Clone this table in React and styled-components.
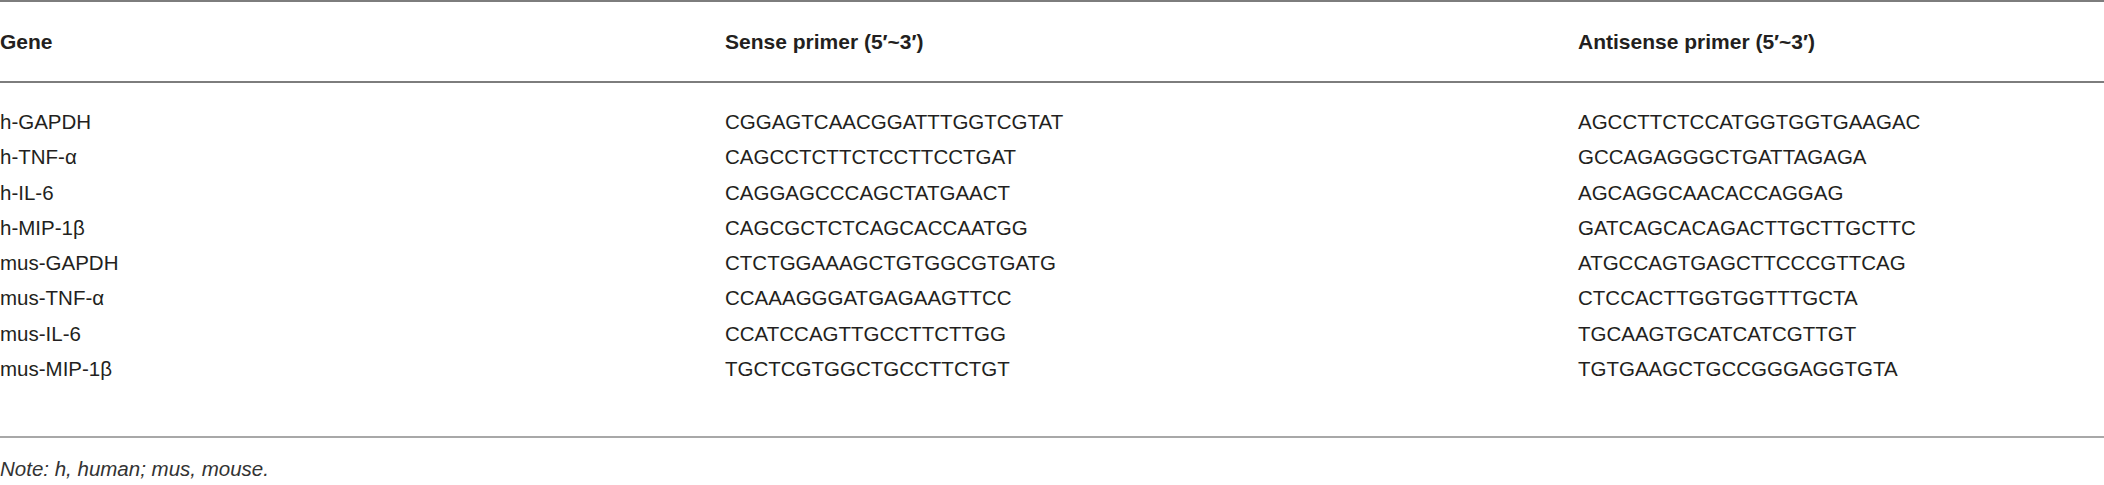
import React from "react";
import styled, { createGlobalStyle } from "styled-components";

const GlobalStyle = createGlobalStyle`
  html, body {
    margin: 0;
    padding: 0;
    background: #ffffff;
  }
`;

const Page = styled.div`
  width: 2104px;
  font-family: "Liberation Sans", Arial, sans-serif;
  color: #231f20;
`;

const Table = styled.table`
  width: 100%;
  border-collapse: collapse;
  table-layout: fixed;
  border-top: 2px solid #7d7d7d;
  border-bottom: 2px solid #a8a8a8;
`;

const HeadCell = styled.th`
  height: 79px;
  padding: 0;
  text-align: left;
  font-weight: 700;
  font-size: 21px;
  border-bottom: 2px solid #7d7d7d;
  vertical-align: middle;
`;

const Cell = styled.td`
  height: 35.3px;
  padding: ${props => (props.$first ? "21px" : "0")} 0 ${props => (props.$last ? "50px" : "0")} 0;
  font-size: 20.5px;
  line-height: 35.3px;
  white-space: nowrap;
  vertical-align: top;
`;

const Note = styled.p`
  margin: 19px 0 0 0;
  font-size: 20.5px;
  line-height: 24px;
  font-style: italic;
  color: #333333;
`;

const primers = [
  ["h-GAPDH", "CGGAGTCAACGGATTTGGTCGTAT", "AGCCTTCTCCATGGTGGTGAAGAC"],
  ["h-TNF-α", "CAGCCTCTTCTCCTTCCTGAT", "GCCAGAGGGCTGATTAGAGA"],
  ["h-IL-6", "CAGGAGCCCAGCTATGAACT", "AGCAGGCAACACCAGGAG"],
  ["h-MIP-1β", "CAGCGCTCTCAGCACCAATGG", "GATCAGCACAGACTTGCTTGCTTC"],
  ["mus-GAPDH", "CTCTGGAAAGCTGTGGCGTGATG", "ATGCCAGTGAGCTTCCCGTTCAG"],
  ["mus-TNF-α", "CCAAAGGGATGAGAAGTTCC", "CTCCACTTGGTGGTTTGCTA"],
  ["mus-IL-6", "CCATCCAGTTGCCTTCTTGG", "TGCAAGTGCATCATCGTTGT"],
  ["mus-MIP-1β", "TGCTCGTGGCTGCCTTCTGT", "TGTGAAGCTGCCGGGAGGTGTA"],
];

const App = () => {
  return (
    <Page>
      <GlobalStyle />
      <Table>
        <colgroup>
          <col style={{ width: "725px" }} />
          <col style={{ width: "853px" }} />
          <col />
        </colgroup>
        <thead>
          <tr>
            <HeadCell>Gene</HeadCell>
            <HeadCell>Sense primer (5′~3′)</HeadCell>
            <HeadCell>Antisense primer (5′~3′)</HeadCell>
          </tr>
        </thead>
        <tbody>
          {primers.map((row, i) => (
            <tr key={row[0]}>
              {row.map((text, j) => (
                <Cell key={j} $first={i === 0} $last={i === primers.length - 1}>
                  {text}
                </Cell>
              ))}
            </tr>
          ))}
        </tbody>
      </Table>
      <Note>Note: h, human; mus, mouse.</Note>
    </Page>
  );
};

export default App;
